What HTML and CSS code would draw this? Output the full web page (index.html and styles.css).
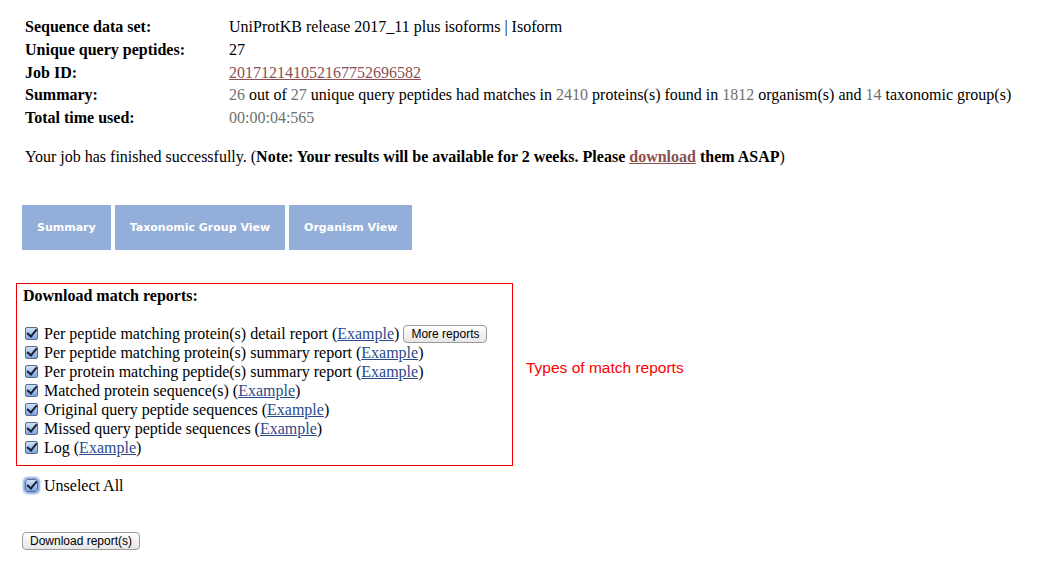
FILE: index.html
```html
<!DOCTYPE html>
<html>
<head>
<meta charset="utf-8">
<title>Job results</title>
<link rel="stylesheet" href="styles.css">
</head>
<body>
<div class="page">
  <div class="info">
    <div class="lbl">Sequence data set:</div><div class="val">UniProtKB release 2017_11 plus isoforms | Isoform</div>
    <div class="lbl">Unique query peptides:</div><div class="val">27</div>
    <div class="lbl">Job ID:</div><div class="val"><a class="visited" href="#">201712141052167752696582</a></div>
    <div class="lbl">Summary:</div><div class="val"><span class="num">26</span> out of <span class="num">27</span> unique query peptides had matches in <span class="num">2410</span> proteins(s) found in <span class="num">1812</span> organism(s) and <span class="num">14</span> taxonomic group(s)</div>
    <div class="lbl">Total time used:</div><div class="val"><span class="num">00:00:04:565</span></div>
  </div>

  <p class="done">Your job has finished successfully. (<b>Note: Your results will be available for 2 weeks. Please <a class="visited" href="#">download</a> them ASAP</b>)</p>

  <div class="tabs">
    <a class="tab" href="#">Summary</a>
    <a class="tab" href="#">Taxonomic Group View</a>
    <a class="tab" href="#">Organism View</a>
  </div>

  <div class="reports-row">
    <div class="reports">
      <div class="line"><b>Download match reports:</b></div>
      <div class="line">&nbsp;</div>
      <div class="line"><span class="cb"></span>Per peptide matching protein(s) detail report (<a class="ex" href="#">Example</a>) <span class="mac-btn">More reports</span></div>
      <div class="line"><span class="cb"></span>Per peptide matching protein(s) summary report (<a class="ex" href="#">Example</a>)</div>
      <div class="line"><span class="cb"></span>Per protein matching peptide(s) summary report (<a class="ex" href="#">Example</a>)</div>
      <div class="line"><span class="cb"></span>Matched protein sequence(s) (<a class="ex" href="#">Example</a>)</div>
      <div class="line"><span class="cb"></span>Original query peptide sequences (<a class="ex" href="#">Example</a>)</div>
      <div class="line"><span class="cb"></span>Missed query peptide sequences (<a class="ex" href="#">Example</a>)</div>
      <div class="line"><span class="cb"></span>Log (<a class="ex" href="#">Example</a>)</div>
    </div>
    <div class="note">Types of match reports</div>
  </div>

  <div class="line unselect"><span class="cb focus"></span>Unselect All</div>

  <div class="dl"><span class="mac-btn">Download report(s)</span></div>
</div>
</body>
</html>
```
FILE: styles.css
```css
html, body {
  margin: 0;
  padding: 0;
  background: #ffffff;
}
body {
  font-family: "Liberation Serif", "Times New Roman", serif;
  font-size: 16px;
  color: #000;
}
.page {
  padding: 16px 0 0 16px;
}
.info {
  display: grid;
  grid-template-columns: 204px auto;
  line-height: 22.75px;
  padding-left: 9px;
}
.lbl { font-weight: bold; }
a.visited { color: #8b4f4f; }
.num { color: #6f6f6f; }
.done {
  margin: 16px 0 0 9px;
  line-height: 22px;
}
.tabs {
  display: flex;
  gap: 4px;
  margin: 37px 0 0 6px;
}
.tab {
  display: block;
  height: 45px;
  line-height: 45px;
  padding: 0 15px;
  background: #93aed8;
  color: #ffffff;
  font-family: "DejaVu Sans", Verdana, sans-serif;
  font-weight: bold;
  font-size: 11px;
  text-decoration: none;
}
.reports-row {
  display: flex;
  margin-top: 33px;
}
.reports {
  width: 489px;
  border: 1px solid #ee0000;
  padding: 2px 0 8px 6px;
}
.line {
  line-height: 19px;
  height: 19px;
  white-space: nowrap;
}
.reports .line .cb { margin-left: 2px; }
.cb {
  display: inline-block;
  width: 13px;
  height: 13px;
  vertical-align: -1px;
  margin-right: 6px;
  border: 1px solid #5a6d8c;
  border-radius: 2px;
  box-sizing: border-box;
  background: linear-gradient(#cfe0f5, #7ea6dd);
  position: relative;
}
.cb::after {
  content: "";
  position: absolute;
  left: 3px;
  top: -1px;
  width: 4px;
  height: 8px;
  border-right: 2.5px solid #1a1f33;
  border-bottom: 2.5px solid #1a1f33;
  transform: rotate(40deg);
}
.cb.focus {
  border-radius: 3px;
  box-shadow: 0 0 2px 2px #86ace2;
}
a.ex { color: #2b4a8a; }
.mac-btn {
  display: inline-block;
  font-family: "Liberation Sans", Arial, sans-serif;
  font-size: 12px;
  line-height: 16px;
  height: 18px;
  box-sizing: border-box;
  padding: 0 7px;
  border: 1px solid #9a9a9a;
  border-radius: 4px;
  background: linear-gradient(#ffffff, #e6e6e6);
  color: #000;
  vertical-align: 1px;
}
.note {
  color: #ff0000;
  font-family: "Liberation Sans", Arial, sans-serif;
  font-size: 15.5px;
  margin: 76px 0 0 13px;
}
.unselect {
  margin: 10px 0 0 9px;
}
.dl {
  margin: 37px 0 0 6px;
}
```
